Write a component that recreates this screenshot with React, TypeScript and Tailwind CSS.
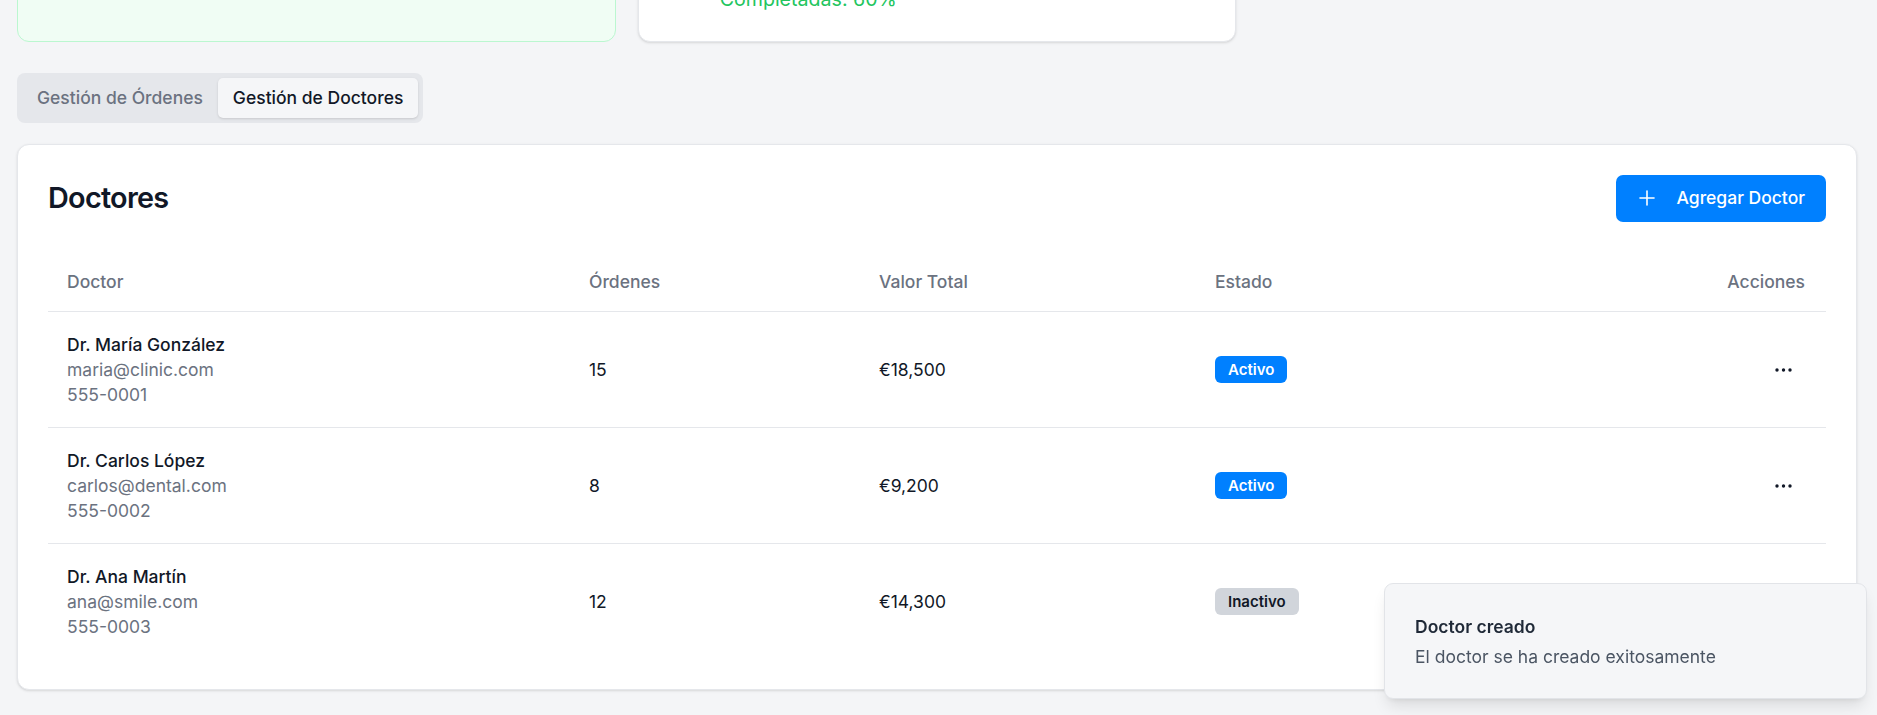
import React from "react";

type Doc = {
  name: string;
  email: string;
  phone: string;
  orders: string;
  total: string;
  active: boolean;
};

const doctors: Doc[] = [
  { name: "Dr. María González", email: "maria@clinic.com", phone: "555-0001", orders: "15", total: "€18,500", active: true },
  { name: "Dr. Carlos López", email: "carlos@dental.com", phone: "555-0002", orders: "8", total: "€9,200", active: true },
  { name: "Dr. Ana Martín", email: "ana@smile.com", phone: "555-0003", orders: "12", total: "€14,300", active: false },
];

function Dots() {
  return (
    <svg width="17" height="6" viewBox="0 0 17 6" className="block">
      <circle cx="2" cy="3" r="1.7" fill="#111827" />
      <circle cx="8.5" cy="3" r="1.7" fill="#111827" />
      <circle cx="15" cy="3" r="1.7" fill="#111827" />
    </svg>
  );
}

function PlusIcon() {
  return (
    <svg width="24" height="24" viewBox="0 0 24 24" fill="none" stroke="currentColor" strokeWidth="1.6" strokeLinecap="round" className="block">
      <path d="M5 12h14" />
      <path d="M12 5v14" />
    </svg>
  );
}

export default function App() {
  return (
    <div className="min-h-screen flex flex-col overflow-hidden bg-[#f4f5f7] pl-[17px] pr-[20px] font-['Inter',sans-serif] text-[#111827]">
      {/* Summary cards (scrolled partly out of view) */}
      <div className="-mt-[108px] grid grid-cols-3 gap-[22px]">
        <div className="h-[150px] rounded-[12px] border border-[#bbf7d0] bg-[#f0fdf4]" />
        <div className="flex h-[150px] flex-col justify-end rounded-[12px] border border-[#e5e7eb] bg-white pb-[27px] pl-[81px] shadow-sm">
          <p className="text-[19.6px] leading-[28.8px] text-[#22c55e]">Completadas: 60%</p>
        </div>
        <div />
      </div>

      {/* Tabs */}
      <div className="mt-[31px] flex">
        <div className="flex h-[50px] items-center rounded-[8px] bg-[#e5e7eb] p-[5px]">
          <div className="flex h-[40px] items-center px-[15px] text-[17.5px] font-medium text-[#6b7280]">
            Gestión de Órdenes
          </div>
          <div className="flex h-[40px] items-center rounded-[5px] bg-[#f5f6f8] px-[15px] text-[17.5px] font-medium text-[#111827] shadow-sm">
            Gestión de Doctores
          </div>
        </div>
      </div>

      {/* Doctors card */}
      <div className="mt-[21px] rounded-[12px] border border-[#e5e7eb] bg-white px-[30px] pb-[30px] pt-[29px] shadow-sm">
        <div className="flex h-[48px] items-center justify-between">
          <h2 className="text-[28.8px] font-semibold leading-none tracking-tight text-[#111827]">Doctores</h2>
          <button className="flex h-[47px] items-center rounded-[7px] bg-[#0080ff] pl-[19px] pr-[21px] text-[17.5px] font-medium text-white">
            <PlusIcon />
            <span className="ml-[18px]">Agregar Doctor</span>
          </button>
        </div>

        <div className="mt-[32px] text-[17.5px]">
          <div className="grid h-[58px] grid-cols-[522px_290px_336px_1fr_200px] items-center border-b border-[#e5e7eb] font-medium text-[#6b7280]">
            <div className="px-[19px]">Doctor</div>
            <div className="px-[19px]">Órdenes</div>
            <div className="px-[19px]">Valor Total</div>
            <div className="px-[19px]">Estado</div>
            <div className="pr-[21px] text-right">Acciones</div>
          </div>

          {doctors.map((d, i) => (
            <div
              key={d.name}
              className={
                "grid grid-cols-[522px_290px_336px_1fr_200px] items-center py-[20px] leading-[25px] " +
                (i < doctors.length - 1 ? "border-b border-[#e5e7eb]" : "")
              }
            >
              <div className="px-[19px]">
                <div className="font-medium text-[#111827]">{d.name}</div>
                <div className="text-[#6b7280]">{d.email}</div>
                <div className="text-[#6b7280]">{d.phone}</div>
              </div>
              <div className="px-[19px] text-[#111827]">{d.orders}</div>
              <div className="px-[19px] text-[#111827]">{d.total}</div>
              <div className="px-[19px]">
                {d.active ? (
                  <span className="inline-flex h-[27px] items-center rounded-[6px] bg-[#0080ff] px-[13px] text-[15px] font-semibold text-white">
                    Activo
                  </span>
                ) : (
                  <span className="inline-flex h-[27px] items-center rounded-[6px] bg-[#d1d5db] px-[13px] text-[15px] font-semibold text-[#111827]">
                    Inactivo
                  </span>
                )}
              </div>
              <div className="flex justify-end pr-[24px]">
                <button className="flex h-[38px] w-[38px] items-center justify-center rounded-[6px]">
                  <Dots />
                </button>
              </div>
            </div>
          ))}
        </div>
      </div>

      {/* Toast */}
      <div className="fixed bottom-[16px] right-[10px] w-[483px] rounded-[9px] border border-[#e2e4e8] bg-[#f5f6f8] px-[30px] pb-[29px] pt-[31px] shadow-lg">
        <div className="text-[17.5px] font-semibold leading-[24px] text-[#1f2937]">Doctor creado</div>
        <div className="mt-[6px] text-[17.5px] leading-[24px] text-[#4b5563]">El doctor se ha creado exitosamente</div>
      </div>
    </div>
  );
}
